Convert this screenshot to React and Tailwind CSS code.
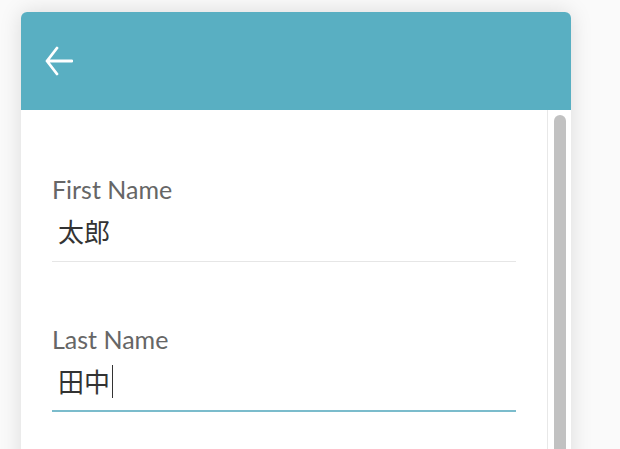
import React from "react";

const Field = ({ label, value, active }) => {
  return (
    <div className="mt-[63px] first:mt-[65px]">
      <div className="text-[25px] leading-[28px] text-[#666666]">{label}</div>
      <div
        className={`h-[59px] flex items-center pl-[6px] ${
          active ? "border-b-2 border-[#7bbccc]" : "border-b border-[#e6e6e6]"
        }`}
      >
        <span className="text-[26px] leading-none text-[#333333] font-['Lato','Noto_Sans_CJK_JP',sans-serif]">
          {value}
        </span>
        {active && <span className="ml-[2px] w-px h-[33px] bg-[#333333]" />}
      </div>
    </div>
  );
};

const App = () => {
  return (
    <div className="w-full h-screen overflow-hidden bg-[#fafafa] pt-[12px] pl-[21px] font-['Lato',sans-serif]">
      <div className="w-[550px] h-[600px] rounded-t-[6px] bg-white shadow-[0_0_22px_rgba(0,0,0,0.13)] flex flex-col">
        <div className="h-[98px] shrink-0 rounded-t-[6px] bg-[#59afc2] flex items-center pl-[24px]">
          <svg width="28" height="30" viewBox="0 0 28 30" fill="none">
            <path
              d="M2 15H27M12 2L2 15L12 28"
              stroke="white"
              strokeWidth="2.8"
              strokeLinecap="round"
              strokeLinejoin="round"
            />
          </svg>
        </div>
        <div className="flex flex-1">
          <div className="flex-1 px-[31px]">
            <Field label="First Name" value="太郎" />
            <Field label="Last Name" value="田中" active />
          </div>
          <div className="w-[24px] border-l border-[#e8e8e8] pt-[5px] flex justify-center pl-[1px]">
            <div className="w-[12px] h-[500px] rounded-full bg-[#c1c1c1]" />
          </div>
        </div>
      </div>
    </div>
  );
};

export default App;
